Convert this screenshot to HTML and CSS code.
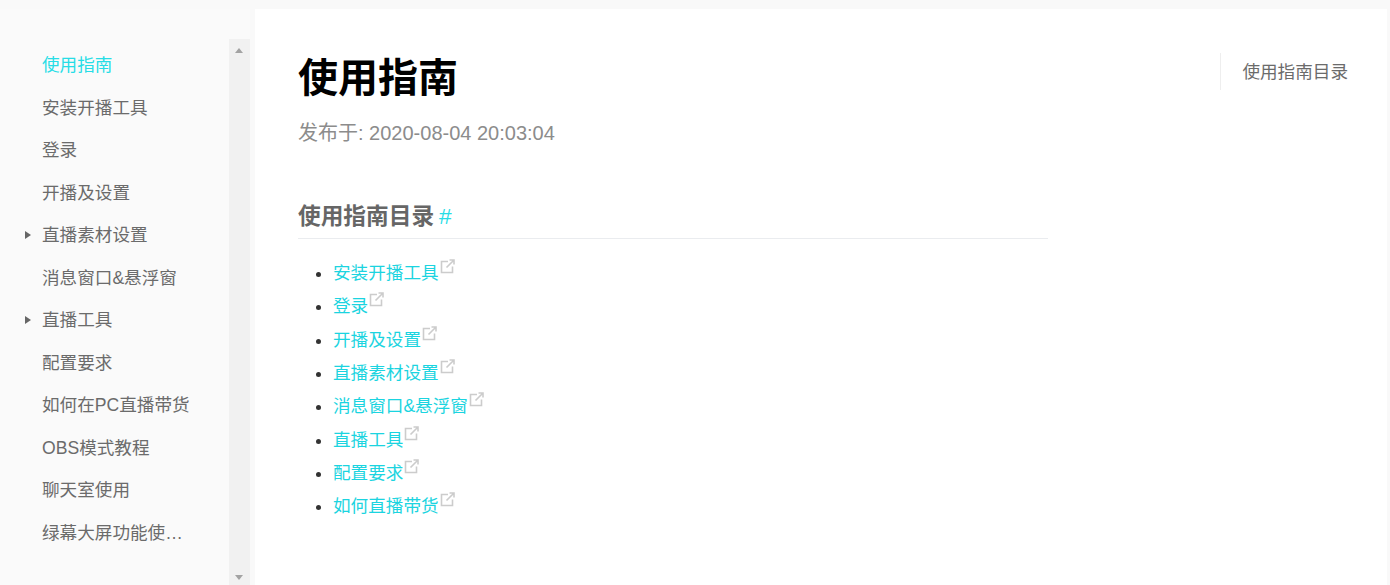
FILE: index.html
```html
<!DOCTYPE html>
<html lang="zh-CN">
<head>
    <meta charset="UTF-8">
    <title>使用指南</title>
    <link rel="stylesheet" href="styles.css">
</head>
<body>
    <svg class="defs" width="0" height="0">
        <symbol id="ext" viewBox="0 0 15 15">
            <path d="M8 2.5H1.5V13.5H12.5V7.5" fill="none" stroke="currentColor" stroke-width="1.6"/>
            <path d="M6.5 8.5L13.5 1.5M9.5 1H14V5.5" fill="none" stroke="currentColor" stroke-width="1.6"/>
        </symbol>
    </svg>
    <div class="page">
        <aside class="sidebar">
            <ul class="nav">
                <li class="active">使用指南</li>
                <li>安装开播工具</li>
                <li>登录</li>
                <li>开播及设置</li>
                <li class="has-sub">直播素材设置</li>
                <li>消息窗口&amp;悬浮窗</li>
                <li class="has-sub">直播工具</li>
                <li>配置要求</li>
                <li>如何在PC直播带货</li>
                <li>OBS模式教程</li>
                <li>聊天室使用</li>
                <li>绿幕大屏功能使…</li>
            </ul>
            <div class="scrollbar">
                <span class="arrow-up"></span>
                <span class="arrow-down"></span>
            </div>
        </aside>
        <main class="content">
            <article class="doc">
                <h1>使用指南</h1>
                <p class="date">发布于: 2020-08-04 20:03:04</p>
                <h2>使用指南目录 <a href="#" class="hash">#</a></h2>
                <ul class="toc">
                    <li><a href="#">安装开播工具</a><svg class="ext"><use href="#ext"/></svg></li>
                    <li><a href="#">登录</a><svg class="ext"><use href="#ext"/></svg></li>
                    <li><a href="#">开播及设置</a><svg class="ext"><use href="#ext"/></svg></li>
                    <li><a href="#">直播素材设置</a><svg class="ext"><use href="#ext"/></svg></li>
                    <li><a href="#">消息窗口&amp;悬浮窗</a><svg class="ext"><use href="#ext"/></svg></li>
                    <li><a href="#">直播工具</a><svg class="ext"><use href="#ext"/></svg></li>
                    <li><a href="#">配置要求</a><svg class="ext"><use href="#ext"/></svg></li>
                    <li><a href="#">如何直播带货</a><svg class="ext"><use href="#ext"/></svg></li>
                </ul>
            </article>
            <nav class="outline">使用指南目录</nav>
        </main>
    </div>
</body>
</html>
```

FILE: styles.css
```css
html, body {
    height: 100%;
}

body {
    margin: 0;
    background: #f9f9f9;
    font-family: "Liberation Sans", Arial, "Noto Sans CJK SC", sans-serif;
    font-size: 17.6px;
    color: #6b6b6b;
    overflow: hidden;
}

a {
    text-decoration: none;
}

.defs {
    display: block;
    height: 0;
}

.page {
    display: flex;
    height: 585px;
    padding-top: 9px;
    box-sizing: border-box;
}

.sidebar {
    width: 250px;
    margin-right: 5px;
    padding-top: 30px;
    display: flex;
    flex-shrink: 0;
    background: #fafafa;
}

.nav {
    list-style: none;
    margin: 0;
    padding: 5px 0 0 42px;
    width: 187px;
    box-sizing: border-box;
}

.nav li {
    height: 42.5px;
    line-height: 42.5px;
    white-space: nowrap;
    position: relative;
}

.nav .active {
    color: #26dde6;
}

.nav .has-sub::before {
    content: "";
    position: absolute;
    left: -17px;
    top: 17px;
    border-left: 6px solid #666;
    border-top: 4px solid transparent;
    border-bottom: 4px solid transparent;
}

.scrollbar {
    width: 21px;
    margin-left: auto;
    background: #f1f1f1;
    position: relative;
}

.arrow-up,
.arrow-down {
    position: absolute;
    left: 6px;
    border-left: 4.5px solid transparent;
    border-right: 4.5px solid transparent;
}

.arrow-up {
    top: 9px;
    border-bottom: 5px solid #a3a3a3;
}

.arrow-down {
    bottom: 5px;
    border-top: 5px solid #a3a3a3;
}

.content {
    width: 1132px;
    background: #fff;
    display: flex;
    justify-content: space-between;
    align-items: flex-start;
    padding-left: 43px;
    box-sizing: border-box;
}

.doc {
    width: 750px;
}

h1 {
    margin: 0;
    padding-top: 44px;
    font-size: 40px;
    line-height: 50px;
    color: #000;
}

.date {
    margin: 14px 0 0;
    font-size: 20px;
    line-height: 32px;
    color: #8c8c8c;
}

h2 {
    margin: 50px 0 0;
    padding-bottom: 5px;
    border-bottom: 1px solid #eaecef;
    font-size: 22.7px;
    line-height: 34px;
    color: #666;
}

.hash {
    margin-left: -1.5px;
    color: #26dde6;
    font-weight: normal;
}

.toc {
    margin: 18px 0 0;
    padding-left: 35px;
    color: #333;
}

.toc li {
    height: 33.35px;
    line-height: 33.35px;
    white-space: nowrap;
}

.toc a {
    color: #1bd4e0;
}

.ext {
    width: 15px;
    height: 15px;
    margin-left: 1px;
    vertical-align: 5px;
    color: #ccc;
}

.outline {
    margin: 44px 39px 0 0;
    padding-left: 21px;
    height: 37px;
    line-height: 38px;
    border-left: 1px solid #eee;
    color: #6b6b6b;
    font-size: 17.6px;
}
```
